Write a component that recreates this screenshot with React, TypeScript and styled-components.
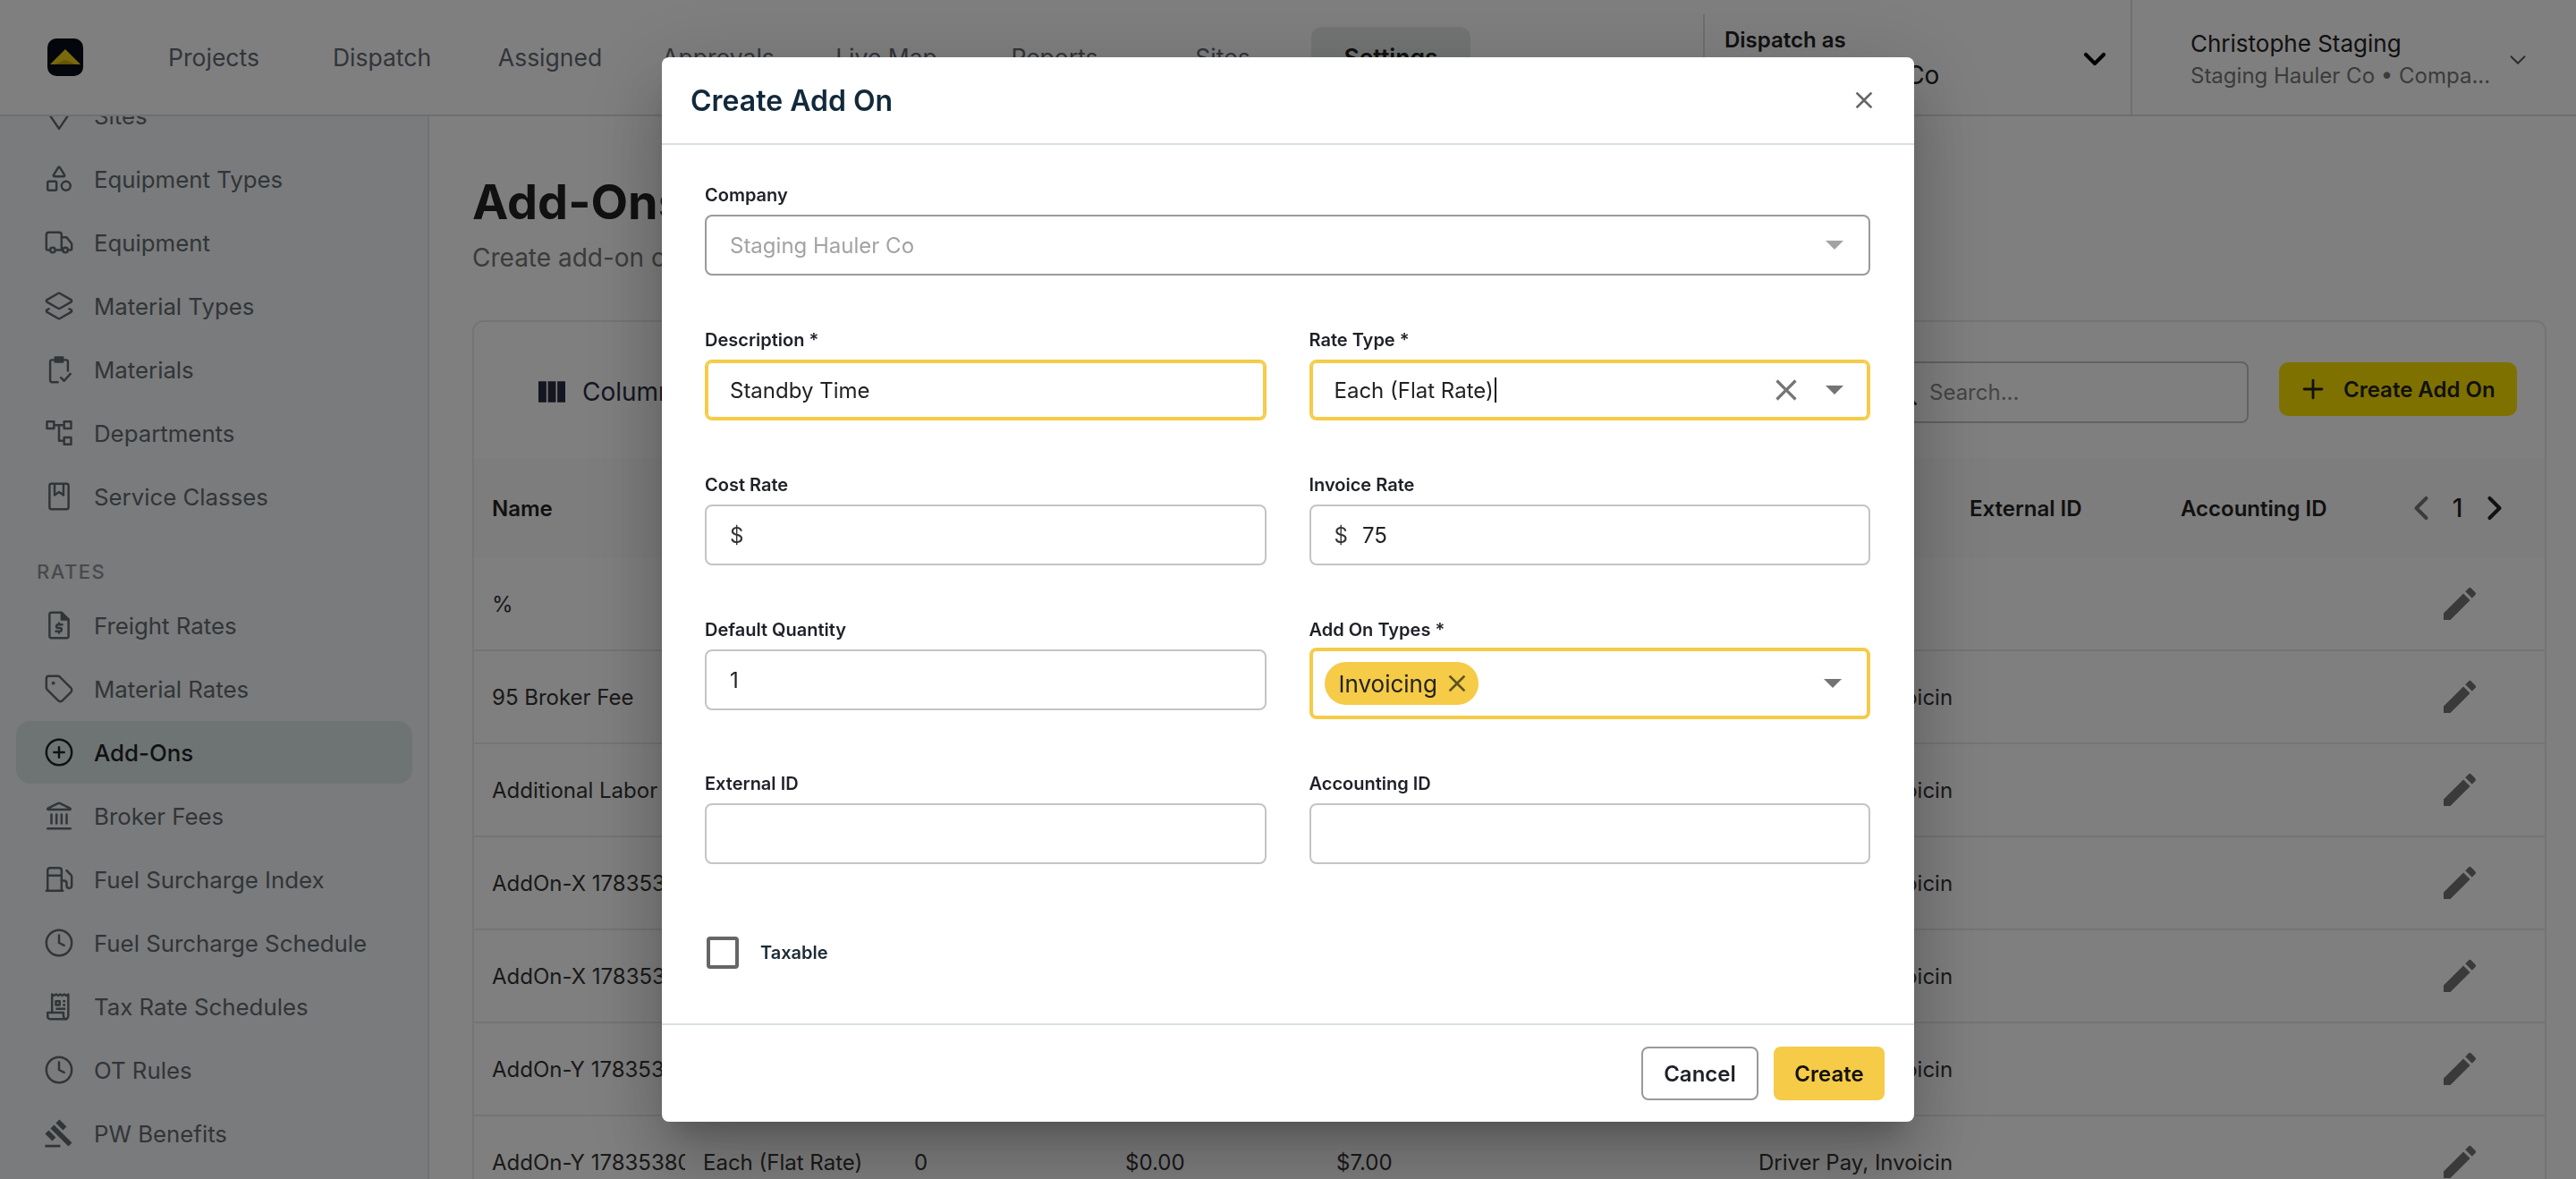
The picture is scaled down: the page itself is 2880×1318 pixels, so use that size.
import React from 'react';
import styled, { createGlobalStyle } from 'styled-components';
import {
    Shapes, Truck, Layers2, Tag, CirclePlus, Landmark, Fuel, Clock,
    ChevronDown, ChevronLeft, ChevronRight, Plus, Search,
} from 'lucide-react';
import { MdEdit, MdGavel, MdViewColumn, MdClose } from 'react-icons/md';

const GlobalStyle = createGlobalStyle`
    html, body {
        margin: 0;
        height: 100%;
        overflow: hidden;
        background: #fff;
        font-family: Inter, "Noto Sans", sans-serif;
    }
    * { box-sizing: border-box; }
`;

function SitesIcon() {
    return (
        <svg width="34" height="34" viewBox="0 0 24 24" fill="none" stroke="currentColor" strokeWidth="1.75" strokeLinejoin="round">
            <path d="M12 22.5L4.5 11.5A8.5 8.5 0 1 1 19.5 11.5z" />
        </svg>
    );
}

function MaterialsIcon() {
    return (
        <svg width="34" height="34" viewBox="0 0 24 24" fill="none" stroke="currentColor" strokeWidth="1.75" strokeLinecap="round" strokeLinejoin="round">
            <path d="M9 4.5H6.5A1.5 1.5 0 0 0 5 6v14.5A1.5 1.5 0 0 0 6.5 22H11" />
            <path d="M15 4.5h2.5A1.5 1.5 0 0 1 19 6v7" />
            <rect x="9" y="2.5" width="6" height="3.5" fill="currentColor" />
            <path d="M13.5 18.5l2.5 2.5 5-5.5" />
        </svg>
    );
}

function DepartmentsIcon() {
    return (
        <svg width="34" height="34" viewBox="0 0 24 24" fill="none" stroke="currentColor" strokeWidth="1.75" strokeLinejoin="round">
            <rect x="2.5" y="3" width="5.5" height="5.5" />
            <rect x="16" y="3" width="5.5" height="5.5" />
            <rect x="16" y="15.5" width="5.5" height="5.5" />
            <path d="M8 5.75h8M12 5.75v12.5h4" />
        </svg>
    );
}

function ServiceClassIcon() {
    return (
        <svg width="34" height="34" viewBox="0 0 24 24" fill="none" stroke="currentColor" strokeWidth="1.75" strokeLinejoin="round">
            <rect x="4.5" y="2" width="15" height="20" rx="1.5" />
            <path d="M8.5 2v9l3.5-2.5 3.5 2.5V2" />
        </svg>
    );
}

function FreightIcon() {
    return (
        <svg width="34" height="34" viewBox="0 0 24 24" fill="none" stroke="currentColor" strokeWidth="1.75" strokeLinecap="round" strokeLinejoin="round">
            <path d="M14 2H6a1.5 1.5 0 0 0-1.5 1.5v17A1.5 1.5 0 0 0 6 22h12a1.5 1.5 0 0 0 1.5-1.5V7.5z" />
            <path d="M14 2v5.5h5.5z" fill="currentColor" />
            <path d="M14.5 11.5h-3.25a1.3 1.3 0 0 0 0 2.6h1.5a1.3 1.3 0 0 1 0 2.6H9.5M12 10.2v1.3M12 16.7V18" />
        </svg>
    );
}

function TaxIcon() {
    return (
        <svg width="34" height="34" viewBox="0 0 24 24" fill="none" stroke="currentColor" strokeWidth="1.75" strokeLinejoin="round">
            <path d="M6.5 17V2.5l1.6 1 1.6-1 1.6 1 1.6-1 1.6 1 1.6-1 1.6 1 1.6-1V19.5a2.5 2.5 0 0 1-2.5 2.5" />
            <path d="M3 17h12.5v2.5a2.5 2.5 0 0 0 2.5 2.5H5a2 2 0 0 1-2-2z" />
            <path d="M9.5 8h3v3h-3zM15 8h2M15 11h2M9.5 14h7.5" />
        </svg>
    );
}

function Logo() {
    return (
        <svg width="40" height="42" viewBox="0 0 40 42">
            <rect x="0" y="0" width="40" height="42" rx="10" fill="#070d18" />
            <polygon points="20,12 37,29 3,29" fill="#f3d51c" />
            <polygon points="20,24 32,29 8,29" fill="#c9a90f" />
        </svg>
    );
}

function DropArrow(props: { light?: boolean }) {
    return (
        <svg width="20" height="10" viewBox="0 0 20 10">
            <polygon points="0,0 20,0 10,10" fill={props.light ? '#a3a3a3' : '#737373'} />
        </svg>
    );
}

const topNav = ['Projects', 'Dispatch', 'Assigned', 'Approvals', 'Live Map', 'Reports', 'Sites', 'Settings'];

const setupItems = [
    { label: 'Sites', icon: <SitesIcon /> },
    { label: 'Equipment Types', icon: <Shapes size={34} strokeWidth={1.75} /> },
    { label: 'Equipment', icon: <Truck size={34} strokeWidth={1.75} /> },
    { label: 'Material Types', icon: <Layers2 size={34} strokeWidth={1.75} /> },
    { label: 'Materials', icon: <MaterialsIcon /> },
    { label: 'Departments', icon: <DepartmentsIcon /> },
    { label: 'Service Classes', icon: <ServiceClassIcon /> },
];

const rateItems = [
    { label: 'Freight Rates', icon: <FreightIcon /> },
    { label: 'Material Rates', icon: <Tag size={34} strokeWidth={1.75} /> },
    { label: 'Add-Ons', icon: <CirclePlus size={34} strokeWidth={1.75} />, active: true },
    { label: 'Broker Fees', icon: <Landmark size={34} strokeWidth={1.75} /> },
    { label: 'Fuel Surcharge Index', icon: <Fuel size={34} strokeWidth={1.75} /> },
    { label: 'Fuel Surcharge Schedule', icon: <Clock size={34} strokeWidth={1.75} /> },
    { label: 'Tax Rate Schedules', icon: <TaxIcon /> },
    { label: 'OT Rules', icon: <Clock size={34} strokeWidth={1.75} /> },
    { label: 'PW Benefits', icon: <MdGavel size={38} /> },
];

const headers = ['Name', '', '', '', '', '', '', 'External ID', 'Accounting ID'];

const types = 'Driver Pay, Invoicing';
const rows = [
    ['%', '', '', '', '', '', ''],
    ['95 Broker Fee', '', '', '', '', '', types],
    ['Additional Labor', '', '', '', '', '', types],
    ['AddOn-X 17835380', '', '', '', '', '', types],
    ['AddOn-X 17835381', '', '', '', '', '', types],
    ['AddOn-Y 17835380', '', '', '', '', '', types],
    ['AddOn-Y 17835380', 'Each (Flat Rate)', '0', '$0.00', '$7.00', '', types],
];

function App() {
    return (
        <>
            <GlobalStyle />
            <Page>
                <TopBar>
                    <LogoBox><Logo /></LogoBox>
                    <TopNav>
                        {topNav.map((item) => (
                            <TopNavItem key={item} $active={item === 'Settings'}>{item}</TopNavItem>
                        ))}
                    </TopNav>
                    <DispatchBlock>
                        <div>
                            <DispatchLabel>Dispatch as</DispatchLabel>
                            <DispatchValue>Staging Hauler Co</DispatchValue>
                        </div>
                        <ChevronDown size={40} strokeWidth={2.5} color="#000" />
                    </DispatchBlock>
                    <UserBlock>
                        <div>
                            <UserName>Christophe Staging</UserName>
                            <UserCompany>Staging Hauler Co • Compa...</UserCompany>
                        </div>
                        <ChevronDown size={30} strokeWidth={1.5} color="#555" />
                    </UserBlock>
                </TopBar>

                <Body>
                    <Sidebar>
                        <SideList>
                            {setupItems.map((item) => (
                                <SideItem key={item.label}>
                                    <SideIcon>{item.icon}</SideIcon>
                                    {item.label}
                                </SideItem>
                            ))}
                            <SideHeading>RATES</SideHeading>
                            {rateItems.map((item) => (
                                <SideItem key={item.label} $active={item.active}>
                                    <SideIcon>{item.icon}</SideIcon>
                                    {item.label}
                                </SideItem>
                            ))}
                        </SideList>
                    </Sidebar>

                    <Main>
                        <PageTitle>Add-Ons</PageTitle>
                        <PageSubtitle>Create add-on charges</PageSubtitle>
                        <Card>
                            <Toolbar>
                                <ColumnsButton>
                                    <MdViewColumn size={40} />
                                    Columns
                                </ColumnsButton>
                                <ToolbarRight>
                                    <SearchBox>
                                        <Search size={36} strokeWidth={2} color="#333" />
                                        <SearchText>Search...</SearchText>
                                    </SearchBox>
                                    <PrimaryPageButton>
                                        <Plus size={34} strokeWidth={2} />
                                        Create Add On
                                    </PrimaryPageButton>
                                </ToolbarRight>
                            </Toolbar>
                            <HeaderRow>
                                {headers.map((h, i) => <HeaderCell key={i}>{h}</HeaderCell>)}
                                <Pager>
                                    <ChevronLeft size={44} strokeWidth={2.2} color="#777" />
                                    <PagerNumber>1</PagerNumber>
                                    <ChevronRight size={44} strokeWidth={2.2} color="#222" />
                                </Pager>
                            </HeaderRow>
                            {rows.map((row, i) => (
                                <Row key={i}>
                                    {row.map((cell, j) => <Cell key={j}>{cell}</Cell>)}
                                    <Cell />
                                    <Cell />
                                    <EditCell><MdEdit size={48} color="#757575" /></EditCell>
                                </Row>
                            ))}
                        </Card>
                    </Main>
                </Body>

                <Backdrop>
                    <Modal>
                        <ModalHeader>
                            <ModalTitle>Create Add On</ModalTitle>
                            <MdClose size={32} color="#666" />
                        </ModalHeader>
                        <ModalBody>
                            <FormGrid>
                                <Field $wide>
                                    <Label>Company</Label>
                                    <Control $disabled>
                                        <ControlText $muted>Staging Hauler Co</ControlText>
                                        <DropArrow light />
                                    </Control>
                                </Field>
                                <Field>
                                    <Label>Description *</Label>
                                    <Control $focused>
                                        <ControlText>Standby Time</ControlText>
                                    </Control>
                                </Field>
                                <Field>
                                    <Label>Rate Type *</Label>
                                    <Control $focused>
                                        <ControlText>Each (Flat Rate)<Caret /></ControlText>
                                        <ClearIcon><MdClose size={40} color="#757575" /></ClearIcon>
                                        <DropArrow />
                                    </Control>
                                </Field>
                                <Field>
                                    <Label>Cost Rate</Label>
                                    <Control>
                                        <Adornment>$</Adornment>
                                    </Control>
                                </Field>
                                <Field>
                                    <Label>Invoice Rate</Label>
                                    <Control>
                                        <Adornment>$</Adornment>
                                        <ControlText>75</ControlText>
                                    </Control>
                                </Field>
                                <Field>
                                    <Label>Default Quantity</Label>
                                    <Control>
                                        <ControlText>1</ControlText>
                                    </Control>
                                </Field>
                                <Field>
                                    <Label>Add On Types *</Label>
                                    <MultiControl>
                                        <Chip>
                                            Invoicing
                                            <MdClose size={32} color="#5c5320" />
                                        </Chip>
                                        <DropArrow />
                                    </MultiControl>
                                </Field>
                                <Field>
                                    <Label>External ID</Label>
                                    <Control />
                                </Field>
                                <Field>
                                    <Label>Accounting ID</Label>
                                    <Control />
                                </Field>
                            </FormGrid>
                            <CheckRow>
                                <CheckBox />
                                <CheckLabel>Taxable</CheckLabel>
                            </CheckRow>
                        </ModalBody>
                        <ModalFooter>
                            <CancelButton>Cancel</CancelButton>
                            <CreateButton>Create</CreateButton>
                        </ModalFooter>
                    </Modal>
                </Backdrop>
            </Page>
        </>
    );
}

const Page = styled.div`
    height: 100vh;
    display: flex;
    flex-direction: column;
    overflow: hidden;
    color: #222;
`;

const TopBar = styled.header`
    position: relative;
    z-index: 2;
    height: 130px;
    flex-shrink: 0;
    display: flex;
    align-items: stretch;
    background: #fff;
    border-bottom: 2px solid #dedede;
`;

const LogoBox = styled.div`
    display: flex;
    align-items: center;
    padding-left: 53px;
`;

const TopNav = styled.nav`
    display: flex;
    align-items: center;
    gap: 10px;
    margin-left: 57px;
`;

const TopNavItem = styled.a<{ $active?: boolean }>`
    width: 178px;
    height: 68px;
    display: flex;
    align-items: center;
    justify-content: center;
    border-radius: 12px;
    font-size: 26.5px;
    font-weight: ${(p) => (p.$active ? 600 : 400)};
    color: ${(p) => (p.$active ? '#222' : '#636a74')};
    background: ${(p) => (p.$active ? '#e6eaea' : 'transparent')};
`;

const DispatchBlock = styled.div`
    margin-left: auto;
    margin-top: 16px;
    width: 478px;
    padding: 0 20px 12px 22px;
    display: flex;
    align-items: center;
    justify-content: space-between;
    border-left: 2px solid #dedede;
`;

const DispatchLabel = styled.div`
    font-size: 24px;
    font-weight: 600;
    line-height: 34px;
    color: #222;
`;

const DispatchValue = styled.div`
    font-size: 28px;
    line-height: 40px;
    margin-top: 2px;
    color: #222;
`;

const UserBlock = styled.div`
    width: 498px;
    padding: 5px 50px 0 65px;
    display: flex;
    align-items: center;
    justify-content: space-between;
    border-left: 2px solid #dedede;
`;

const UserName = styled.div`
    font-size: 26px;
    line-height: 36px;
    color: #222;
`;

const UserCompany = styled.div`
    font-size: 24px;
    line-height: 36px;
    color: #777;
`;

const Body = styled.div`
    flex: 1;
    min-height: 0;
    display: flex;
`;

const Sidebar = styled.aside`
    width: 480px;
    flex-shrink: 0;
    overflow: hidden;
    padding: 0 17px 0 18px;
    background: #f4f7f8;
    border-right: 2px solid #e2e5e6;
`;

const SideList = styled.div`
    margin-top: -36px;
    display: flex;
    flex-direction: column;
    gap: 1px;
`;

const SideItem = styled.a<{ $active?: boolean }>`
    height: 70px;
    flex-shrink: 0;
    display: flex;
    align-items: center;
    gap: 22px;
    padding-left: 31px;
    border-radius: 16px;
    font-size: 25.8px;
    color: ${(p) => (p.$active ? '#1f2529' : '#636b70')};
    font-weight: ${(p) => (p.$active ? 500 : 400)};
    background: ${(p) => (p.$active ? '#dde8e6' : 'transparent')};
`;

const SideIcon = styled.span`
    width: 34px;
    height: 34px;
    display: flex;
    align-items: center;
    justify-content: center;
`;

const SideHeading = styled.div`
    margin: 34px 0 10px;
    padding-left: 23px;
    line-height: 28px;
    font-size: 22px;
    font-weight: 500;
    letter-spacing: 1.5px;
    color: #8e9599;
`;

const Main = styled.main`
    flex: 1;
    min-width: 0;
    padding: 62px 33px 0 48px;
    overflow: hidden;
`;

const PageTitle = styled.h1`
    margin: 0;
    font-size: 54px;
    line-height: 68px;
    font-weight: 700;
    color: #222;
`;

const PageSubtitle = styled.p`
    margin: 8px 0 0;
    font-size: 28px;
    line-height: 40px;
    color: #777;
`;

const Card = styled.section`
    margin-top: 50px;
    border: 2px solid #e8e8e8;
    border-radius: 12px;
`;

const Toolbar = styled.div`
    height: 152px;
    display: flex;
    align-items: center;
    justify-content: space-between;
    padding: 4px 31px 0 67px;
`;

const ColumnsButton = styled.button`
    display: flex;
    align-items: center;
    gap: 14px;
    padding: 0;
    border: none;
    background: none;
    font: inherit;
    font-size: 28px;
    color: #2b2d42;
`;

const ToolbarRight = styled.div`
    display: flex;
    align-items: center;
    gap: 34px;
`;

const SearchBox = styled.div`
    width: 424px;
    height: 69px;
    display: flex;
    align-items: center;
    gap: 11px;
    padding-left: 18px;
    border: 2px solid #c4c4c4;
    border-radius: 8px;
`;

const SearchText = styled.span`
    font-size: 24px;
    color: #8a8a8a;
`;

const PrimaryPageButton = styled.button`
    width: 266px;
    height: 60px;
    margin-bottom: 6px;
    display: flex;
    align-items: center;
    gap: 17px;
    padding: 0 0 0 21px;
    border: none;
    border-radius: 10px;
    background: #ffe300;
    font: inherit;
    font-size: 24px;
    font-weight: 600;
    color: #222;
`;

const HeaderRow = styled.div`
    height: 112px;
    display: grid;
    grid-template-columns: repeat(9, 236px) 1fr;
    align-items: center;
    background: #fbfbfb;
`;

const HeaderCell = styled.div`
    padding-left: 20px;
    font-size: 24px;
    font-weight: 600;
    color: #222;
`;

const Pager = styled.div`
    display: flex;
    align-items: center;
    justify-content: center;
    margin-left: -4px;
`;

const PagerNumber = styled.span`
    width: 38px;
    text-align: center;
    font-size: 28px;
    font-weight: 500;
    color: #222;
`;

const Row = styled.div`
    height: 104px;
    display: grid;
    grid-template-columns: repeat(9, 236px) 1fr;
    align-items: center;
    border-bottom: 2px solid #e8e8e8;
`;

const Cell = styled.div`
    padding-left: 20px;
    overflow: hidden;
    white-space: nowrap;
    font-size: 24px;
    color: #333;
`;

const EditCell = styled.div`
    display: flex;
    justify-content: center;
`;

const Backdrop = styled.div`
    position: fixed;
    inset: 0;
    z-index: 10;
    display: flex;
    align-items: center;
    justify-content: center;
    background: rgba(0, 0, 0, 0.5);
`;

const Modal = styled.div`
    width: 1400px;
    height: calc(100vh - 128px);
    display: flex;
    flex-direction: column;
    background: #fff;
    border-radius: 8px;
    box-shadow: 0 22px 30px -14px rgba(0, 0, 0, 0.2), 0 48px 76px 6px rgba(0, 0, 0, 0.14), 0 18px 92px 16px rgba(0, 0, 0, 0.12);
`;

const ModalHeader = styled.div`
    height: 98px;
    flex-shrink: 0;
    display: flex;
    align-items: center;
    justify-content: space-between;
    padding: 0 40px 0 32px;
    border-bottom: 2px solid #d9e0e3;
`;

const ModalTitle = styled.h2`
    margin: 0;
    font-size: 32px;
    font-weight: 600;
    color: #12293b;
`;

const ModalBody = styled.div`
    flex: 1;
    min-height: 0;
    padding: 44px 49px 0 48px;
`;

const FormGrid = styled.div`
    display: grid;
    grid-template-columns: 1fr 1fr;
    column-gap: 48px;
    row-gap: 60px;
`;

const Field = styled.div<{ $wide?: boolean }>`
    grid-column: ${(p) => (p.$wide ? '1 / -1' : 'auto')};
    display: flex;
    flex-direction: column;
    gap: 10px;
`;

const Label = styled.label`
    font-size: 20px;
    line-height: 24px;
    font-weight: 600;
    color: #1f2128;
`;

const Control = styled.div<{ $focused?: boolean; $disabled?: boolean }>`
    height: 68px;
    display: flex;
    align-items: center;
    padding: 0 28px 0 26px;
    border: 2px solid ${(p) => (p.$focused ? '#f5cb47' : p.$disabled ? '#9a9a9a' : '#c4c4c4')};
    border-radius: 8px;
    box-shadow: ${(p) => (p.$focused ? 'inset 0 0 0 2px #f5cb47' : 'none')};
`;

const ControlText = styled.span<{ $muted?: boolean }>`
    flex: 1;
    display: flex;
    align-items: center;
    font-size: 24px;
    color: ${(p) => (p.$muted ? '#a3a3a3' : '#222')};
`;

const Caret = styled.i`
    width: 2px;
    height: 28px;
    margin-left: 1px;
    background: #111;
`;

const ClearIcon = styled.span`
    display: flex;
    margin-right: 24px;
`;

const Adornment = styled.span`
    margin-right: 16px;
    font-size: 24px;
    color: #333;
`;

const MultiControl = styled.div`
    height: 80px;
    margin-top: -2px;
    display: flex;
    align-items: center;
    justify-content: space-between;
    padding: 0 28px 0 13px;
    border: 4px solid #f5cb47;
    border-radius: 8px;
`;

const Chip = styled.span`
    height: 48px;
    display: flex;
    align-items: center;
    gap: 6px;
    padding: 0 8px 0 16px;
    border-radius: 24px;
    background: #f5cb47;
    font-size: 26px;
    color: #222;
`;

const CheckRow = styled.div`
    margin-top: 81px;
    display: flex;
    align-items: center;
    gap: 24px;
    padding-left: 2px;
`;

const CheckBox = styled.span`
    width: 36px;
    height: 36px;
    border: 4px solid #666;
    border-radius: 4px;
`;

const CheckLabel = styled.span`
    font-size: 20px;
    font-weight: 600;
    color: #1c2b33;
`;

const ModalFooter = styled.div`
    height: 110px;
    flex-shrink: 0;
    display: flex;
    align-items: flex-start;
    justify-content: flex-end;
    gap: 17px;
    padding: 24px 33px 0 0;
    border-top: 2px solid #d9e0e3;
`;

const CancelButton = styled.button`
    width: 131px;
    height: 60px;
    border: 2px solid #999;
    border-radius: 8px;
    background: #fff;
    font: inherit;
    font-size: 24px;
    font-weight: 600;
    color: #1f2128;
`;

const CreateButton = styled.button`
    width: 124px;
    height: 60px;
    border: none;
    border-radius: 8px;
    background: #f5cb47;
    font: inherit;
    font-size: 24px;
    font-weight: 600;
    color: #111;
`;

export default App;
